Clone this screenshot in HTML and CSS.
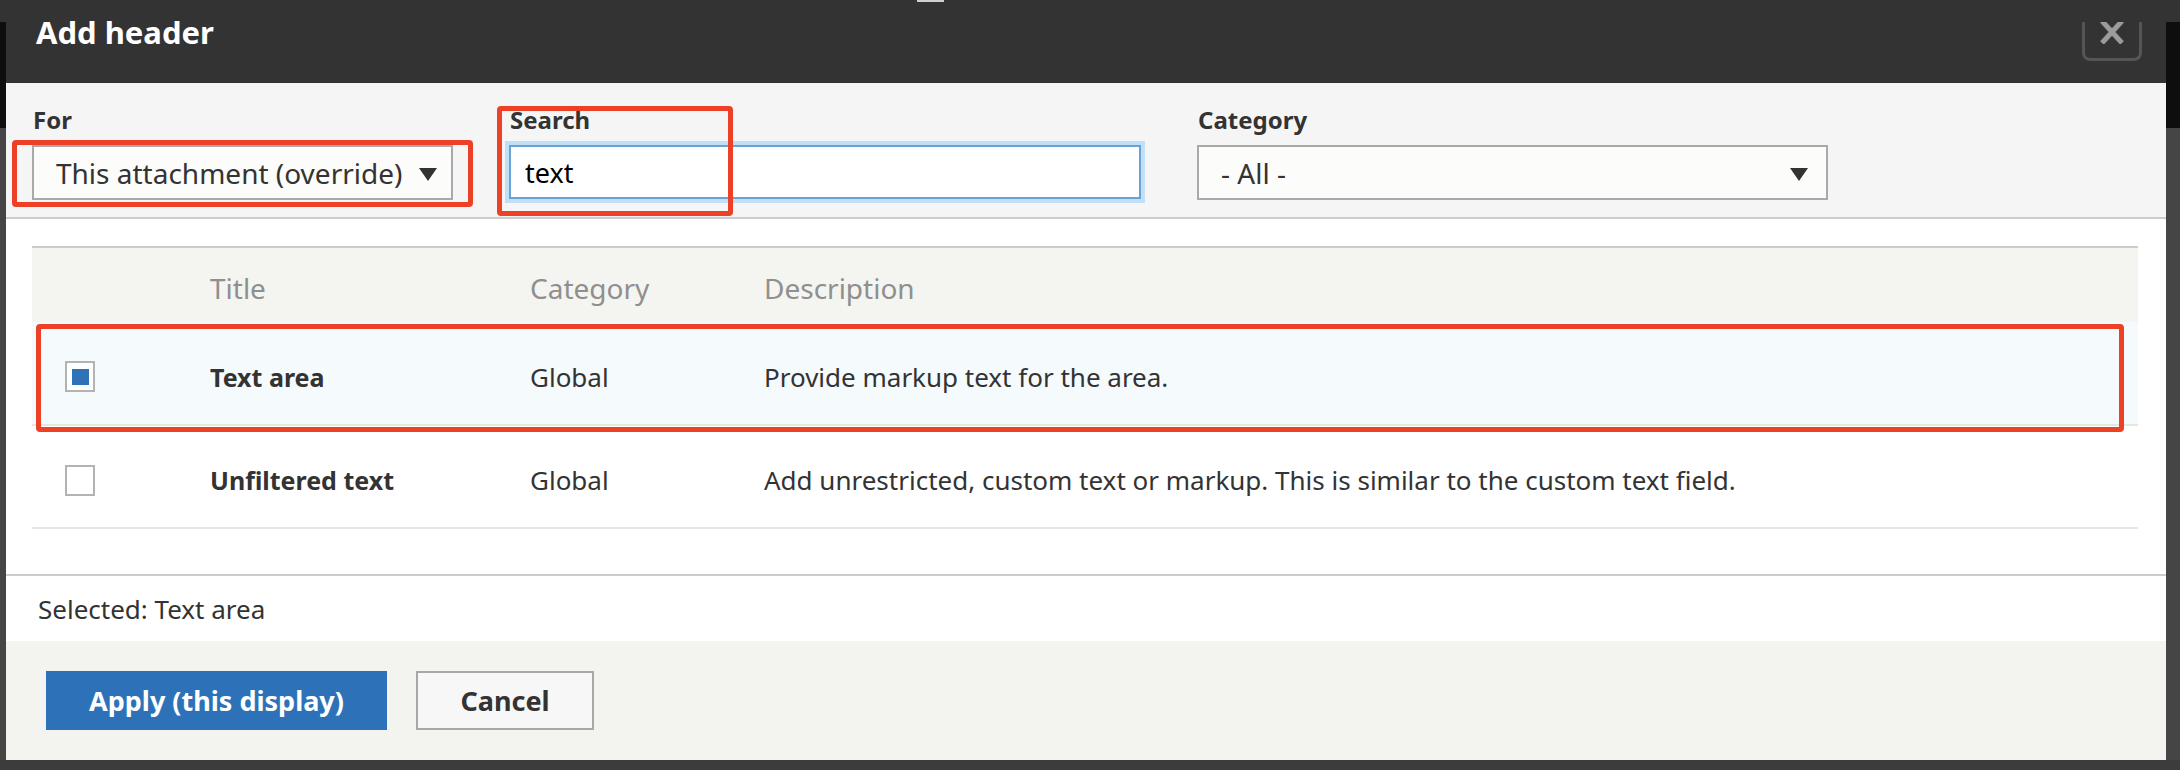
FILE: index.html
```html
<!DOCTYPE html>
<html lang="en">
<head>
<meta charset="utf-8">
<title>Add header</title>
<link rel="stylesheet" href="styles.css">
</head>
<body>
<span class="topmark"></span>
<div class="stage">
  <div class="side side-left"></div>
  <div class="dialog">
    <div class="titlebar">
      <h1 class="title">Add header</h1>
      <button class="close" aria-label="Close">
        <svg width="24" height="22" viewBox="0 0 24 22"><path d="M2 -1 L22 21 M22 -1 L2 21" stroke="#9b9b9b" stroke-width="5" fill="none"/></svg>
      </button>
    </div>
    <div class="filters">
      <div class="group group-for">
        <label class="label">For</label>
        <div class="select select-for"><span>This attachment (override)</span><i class="arrow"></i></div>
        <span class="annot annot-for"></span>
      </div>
      <div class="group group-search">
        <label class="label">Search</label>
        <input class="search" type="text" value="text">
        <span class="annot annot-search"></span>
      </div>
      <div class="group group-cat">
        <label class="label">Category</label>
        <div class="select select-cat"><span>- All -</span><i class="arrow"></i></div>
      </div>
    </div>
    <div class="results">
      <div class="table-wrap">
        <table class="tbl">
          <colgroup><col class="c1"><col class="c2"><col class="c3"><col></colgroup>
          <thead>
            <tr><th></th><th>Title</th><th>Category</th><th>Description</th></tr>
          </thead>
          <tbody>
            <tr class="sel">
              <td class="cbcell"><span class="cb cb-on"></span></td>
              <td class="name">Text area</td>
              <td>Global</td>
              <td>Provide markup text for the area.</td>
            </tr>
            <tr>
              <td class="cbcell"><span class="cb"></span></td>
              <td class="name">Unfiltered text</td>
              <td>Global</td>
              <td>Add unrestricted, custom text or markup. This is similar to the custom text field.</td>
            </tr>
          </tbody>
        </table>
        <span class="annot annot-row"></span>
      </div>
    </div>
    <div class="selected">Selected: Text area</div>
    <div class="footer">
      <button class="btn btn-primary">Apply (this display)</button>
      <button class="btn btn-cancel">Cancel</button>
    </div>
  </div>
  <div class="side side-right"></div>
</div>
</body>
</html>
```
FILE: styles.css
```css
html, body {
  margin: 0;
  padding: 0;
}
body {
  width: 2180px;
  height: 770px;
  overflow: hidden;
  background: #3c3c3c;
  font-family: "Noto Sans", "Open Sans", sans-serif;
  color: #333;
  position: relative;
}
.topmark {
  position: absolute;
  left: 917px;
  top: 0;
  width: 27px;
  height: 2px;
  background: #cfcfcf;
}
.stage {
  display: flex;
  align-items: stretch;
}
.side {
  background: linear-gradient(#333 0, #333 22px, #0e0e0e 22px, #0e0e0e 128px, #454545 128px);
}
.side-left { width: 6px; }
.side-right { width: 14px; }
.dialog {
  width: 2160px;
  display: flex;
  flex-direction: column;
}
.titlebar {
  height: 83px;
  background: #333;
  display: flex;
  justify-content: space-between;
  align-items: flex-start;
  padding: 0 24px 0 30px;
  box-sizing: border-box;
}
.title {
  margin: 0;
  padding-top: 17px;
  font-size: 31px;
  line-height: 30px;
  font-weight: 700;
  color: #fff;
}
.close {
  margin-top: 22px;
  width: 60px;
  height: 39px;
  box-sizing: border-box;
  border: 3px solid #555;
  border-top: 0;
  border-radius: 0 0 8px 8px;
  background: transparent;
  padding: 0;
  display: flex;
  justify-content: center;
  align-items: flex-start;
}
.close svg { display: block; }
.filters {
  background: #f5f5f5;
  border-bottom: 2px solid #ccc;
  display: flex;
  gap: 56px;
  padding: 22px 0 17px 26px;
}
.group {
  position: relative;
  display: flex;
  flex-direction: column;
  gap: 10px;
}
.group-for { width: 421px; }
.group-search { width: 632px; }
.group-cat { width: 631px; }
.label {
  font-size: 24px;
  line-height: 30px;
  font-weight: 700;
  color: #333;
  padding-left: 1px;
}
.select {
  height: 55px;
  box-sizing: border-box;
  border: 2px solid #a9a9a9;
  background: #fcfcfa;
  display: flex;
  align-items: center;
  justify-content: space-between;
  font-size: 28px;
  color: #333;
}
.select-for { padding: 0 14px 0 22px; }
.select-cat { padding: 0 18px 0 22px; }
.arrow {
  width: 0;
  height: 0;
  border-left: 9px solid transparent;
  border-right: 9px solid transparent;
  border-top: 13px solid #333;
  margin-top: 4px;
}
.search {
  height: 54px;
  box-sizing: border-box;
  width: 632px;
  border: 2px solid #68a3d4;
  box-shadow: 0 0 0 4px #c2dff8;
  background: #fff;
  font-family: "Noto Sans", sans-serif;
  font-size: 27px;
  color: #000;
  padding: 0 0 0 14px;
  outline: none;
  margin: 0;
}
.annot {
  position: absolute;
  border: 5px solid #ec4127;
  border-radius: 4px;
  box-sizing: border-box;
  pointer-events: none;
}
.annot-for {
  left: -20px;
  top: 35px;
  width: 461px;
  height: 67px;
}
.annot-search {
  left: -12px;
  top: 1px;
  width: 236px;
  height: 110px;
}
.results {
  background: #fff;
  border-bottom: 2px solid #ccc;
  padding: 27px 28px 45px 26px;
}
.table-wrap {
  position: relative;
}
.tbl {
  width: 100%;
  border-collapse: collapse;
  table-layout: fixed;
  border-top: 2px solid #ccc;
}
.c1 { width: 178px; }
.c2 { width: 320px; }
.c3 { width: 234px; }
.tbl th {
  background: #f4f4f0;
  height: 75px;
  padding: 5px 0 0 0;
  box-sizing: border-box;
  text-align: left;
  font-weight: 400;
  font-size: 28px;
  color: #8f8f8f;
  vertical-align: middle;
}
.tbl td {
  height: 103px;
  padding: 7px 0 0 0;
  box-sizing: border-box;
  font-size: 26px;
  color: #333;
  vertical-align: middle;
  border-bottom: 2px solid #e6e6e2;
}
.tbl tr.sel td { background: #f5fafd; }
.tbl td.name {
  font-weight: 700;
  font-size: 25px;
}
.cbcell { padding-left: 33px !important; }
.cb {
  display: flex;
  align-items: center;
  justify-content: center;
  width: 30px;
  height: 31px;
  box-sizing: border-box;
  border: 2px solid #b3b3b3;
  background: #fff;
}
.cb-on::after {
  content: "";
  width: 17px;
  height: 16px;
  background: #2f72b8;
}
.annot-row {
  left: 4px;
  top: 78px;
  width: 2088px;
  height: 108px;
}
.selected {
  background: #fff;
  font-size: 26px;
  line-height: 34px;
  color: #333;
  padding: 16px 0 15px 32px;
}
.footer {
  background: #f3f4ef;
  display: flex;
  gap: 29px;
  padding: 30px 0 30px 40px;
}
.btn {
  height: 59px;
  box-sizing: border-box;
  font-family: "Noto Sans", sans-serif;
  font-size: 27px;
  font-weight: 700;
  padding: 0;
  margin: 0;
}
.btn-primary {
  width: 341px;
  background: #2d72b8;
  color: #fff;
  border: 0;
}
.btn-cancel {
  width: 178px;
  background: #f7f7f7;
  color: #333;
  border: 2px solid #a8a8a8;
}
```
